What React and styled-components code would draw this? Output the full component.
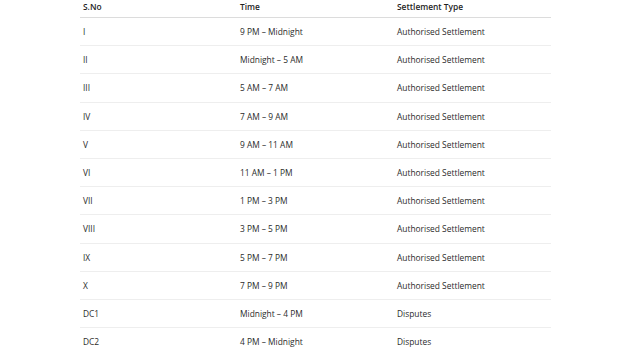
import React from 'react';
import styled, { createGlobalStyle } from 'styled-components';

const GlobalStyle = createGlobalStyle`
  body {
    margin: 0;
    background: #fff;
    font-family: "Open Sans", "Noto Sans", sans-serif;
  }
`;

const Page = styled.div`
  padding: 0 70px 0 80px;
  height: 348px;
  overflow: hidden;
`;

const Table = styled.table`
  width: 471px;
  border-collapse: collapse;
  table-layout: fixed;
  font-size: 8.4px;
  color: #2b2b2b;
`;

const HeadCell = styled.th`
  text-align: left;
  font-weight: 600;
  color: #1f1f1f;
  line-height: 12px;
  padding: 1px 3px 4px;
  border-bottom: 1px solid #dcdcdc;
`;

const Cell = styled.td`
  line-height: 12px;
  padding: 8.1px 3px 7.1px;
  border-bottom: 1px solid #eeeeee;
`;

const rows = [
  ['I', '9 PM – Midnight', 'Authorised Settlement'],
  ['II', 'Midnight – 5 AM', 'Authorised Settlement'],
  ['III', '5 AM – 7 AM', 'Authorised Settlement'],
  ['IV', '7 AM – 9 AM', 'Authorised Settlement'],
  ['V', '9 AM – 11 AM', 'Authorised Settlement'],
  ['VI', '11 AM – 1 PM', 'Authorised Settlement'],
  ['VII', '1 PM – 3 PM', 'Authorised Settlement'],
  ['VIII', '3 PM – 5 PM', 'Authorised Settlement'],
  ['IX', '5 PM – 7 PM', 'Authorised Settlement'],
  ['X', '7 PM – 9 PM', 'Authorised Settlement'],
  ['DC1', 'Midnight – 4 PM', 'Disputes'],
  ['DC2', '4 PM – Midnight', 'Disputes'],
];

export default function App() {
  return (
    <Page>
      <GlobalStyle />
      <Table>
        <thead>
          <tr>
            <HeadCell>S.No</HeadCell>
            <HeadCell>Time</HeadCell>
            <HeadCell>Settlement Type</HeadCell>
          </tr>
        </thead>
        <tbody>
          {rows.map((r) => (
            <tr key={r[0]}>
              <Cell>{r[0]}</Cell>
              <Cell>{r[1]}</Cell>
              <Cell>{r[2]}</Cell>
            </tr>
          ))}
        </tbody>
      </Table>
    </Page>
  );
}
